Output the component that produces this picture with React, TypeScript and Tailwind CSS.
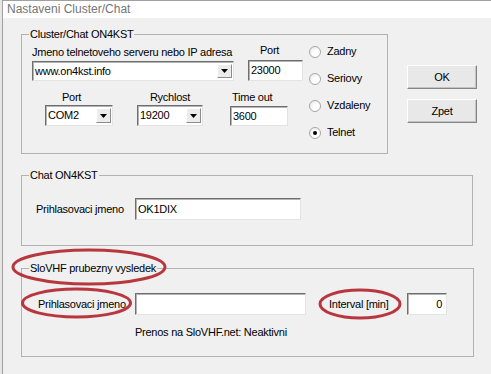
import React from "react";

function Sunken({ className, children }: { className: string; children?: React.ReactNode }) {
  return (
    <div
      className={`flex items-center bg-white border border-t-[#6e6e6e] border-l-[#6e6e6e] border-r-[#e3e3e3] border-b-[#e3e3e3] shadow-[inset_1px_1px_0_#b4b4b4] ${className}`}
    >
      {children}
    </div>
  );
}

function Combo({ className, value }: { className: string; value: string }) {
  return (
    <Sunken className={className}>
      <span className="flex-1 pl-[2px]">{value}</span>
      <div className="w-[15px] h-[calc(100%-4px)] mr-[1px] flex items-center justify-center bg-[#ececec] border border-t-white border-l-white border-r-[#8c8c8c] border-b-[#8c8c8c]">
        <svg width="7" height="4" viewBox="0 0 7 4">
          <path d="M0 0h7L3.5 4z" fill="#000" />
        </svg>
      </div>
    </Sunken>
  );
}

function Radio({ label, checked }: { label: string; checked?: boolean }) {
  return (
    <div className="flex items-center h-[13px]">
      <div className="w-[12px] h-[12px] rounded-full border border-[#a6a6a6] bg-[radial-gradient(circle_at_65%_65%,#ffffff_35%,#e2e2e2)] flex items-center justify-center">
        {checked && <div className="w-[4px] h-[4px] rounded-full bg-black" />}
      </div>
      <span className="ml-[6px]">{label}</span>
    </div>
  );
}

function Btn({ label }: { label: string }) {
  return (
    <button className="w-[70px] h-[24px] bg-[#e8e8e8] border border-t-white border-l-white border-r-[#858585] border-b-[#858585] shadow-[inset_-1px_-1px_0_#c4c4c4] text-[11px] leading-[13px]">
      {label}
    </button>
  );
}

export default function App() {
  return (
    <div className="w-[491px] h-[374px] flex bg-[#f0f0f0] overflow-hidden relative font-['Liberation_Sans',Arial,sans-serif] text-[11px] leading-[13px] tracking-[-0.25px] whitespace-nowrap text-black">
      <div className="w-[2px] bg-[#e6e6e6]" />
      <div className="flex-1 flex flex-col border-l border-t border-[#a0a0a0]">
        <div className="h-[17px] bg-white pl-[4px] flex items-center text-[12px] tracking-normal text-[#767676]">
          Nastaveni Cluster/Chat
        </div>

        <div className="flex-1 flex flex-col pl-[18px] pt-[10px]">
          {/* cluster + buttons */}
          <div className="flex items-start">
            <fieldset className="w-[367px] h-[126px] border border-[#b2b2b2]">
              <legend className="ml-[7px] px-[1px]">Cluster/Chat ON4KST</legend>
              <div className="flex">
                <div className="flex flex-col pt-[3px]">
                  <div className="flex items-end pl-[10px]">
                    <div className="flex flex-col w-[202px]">
                      <span className="pb-[2px]">Jmeno telnetoveho serveru nebo IP adresa</span>
                      <Combo className="h-[20px]" value="www.on4kst.info" />
                    </div>
                    <div className="flex flex-col ml-[14px] w-[55px]">
                      <span className="pl-[12px] pb-[3px]">Port</span>
                      <Sunken className="h-[21px] pl-[2px]">23000</Sunken>
                    </div>
                  </div>
                  <div className="flex items-end pl-[23px] mt-[10px]">
                    <div className="flex flex-col w-[68px]">
                      <span className="pl-[17px] pb-[1px]">Port</span>
                      <Combo className="h-[21px]" value="COM2" />
                    </div>
                    <div className="flex flex-col ml-[24px] w-[66px]">
                      <span className="text-center pb-[1px]">Rychlost</span>
                      <Combo className="h-[21px]" value="19200" />
                    </div>
                    <div className="flex flex-col ml-[27px] w-[58px]">
                      <span className="pl-[2px] pb-[2px]">Time out</span>
                      <Sunken className="h-[20px] pl-[2px]">3600</Sunken>
                    </div>
                  </div>
                </div>
                <div className="flex flex-col gap-[14px] ml-[6px] pt-[4px]">
                  <Radio label="Zadny" />
                  <Radio label="Seriovy" />
                  <Radio label="Vzdaleny" />
                  <Radio label="Telnet" checked />
                </div>
              </div>
            </fieldset>
            <div className="flex flex-col ml-[19px] pt-[37px] gap-[10px]">
              <Btn label="OK" />
              <Btn label="Zpet" />
            </div>
          </div>

          {/* chat */}
          <fieldset className="mt-[15px] w-[452px] h-[77px] border border-[#b2b2b2]">
            <legend className="ml-[7px] px-[1px]">Chat ON4KST</legend>
            <div className="flex items-center pl-[14px] mt-[16px]">
              <span className="w-[99px]">Prihlasovaci jmeno</span>
              <Sunken className="w-[166px] h-[22px] pl-[2px]">OK1DIX</Sunken>
            </div>
          </fieldset>

          {/* slovhf */}
          <fieldset className="mt-[16px] w-[453px] h-[95px] border border-[#b2b2b2]">
            <legend className="ml-[7px] px-[1px]">SloVHF prubezny vysledek</legend>
            <div className="flex items-center pl-[16px] mt-[18px]">
              <span className="w-[97px]">Prihlasovaci jmeno</span>
              <Sunken className="w-[171px] h-[22px]" />
              <span className="ml-[23px] w-[60px]">Interval [min]</span>
              <Sunken className="ml-[18px] w-[40px] h-[22px] justify-end pr-[4px]">0</Sunken>
            </div>
            <div className="pl-[113px] mt-[11px]">Prenos na SloVHF.net: Neaktivni</div>
          </fieldset>
        </div>
      </div>

      <svg className="absolute inset-0 pointer-events-none" width="491" height="374" viewBox="0 0 491 374">
        <g fill="none" stroke="#b3232b" strokeWidth="3" opacity="0.9">
          <ellipse cx="89" cy="267" rx="76" ry="17" />
          <ellipse cx="76.5" cy="303" rx="54" ry="14" />
          <ellipse cx="360" cy="304" rx="40" ry="14" />
        </g>
      </svg>
    </div>
  );
}
